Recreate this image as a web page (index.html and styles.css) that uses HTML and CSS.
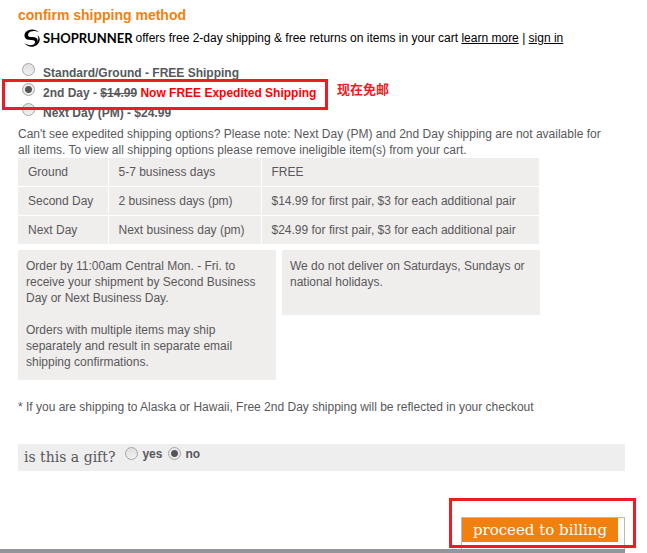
FILE: index.html
```html
<!DOCTYPE html>
<html lang="en">
<head>
    <meta charset="UTF-8">
    <meta name="viewport" content="width=device-width, initial-scale=1.0">
    <title>Confirm shipping method</title>
    <link rel="stylesheet" href="styles.css">
</head>
<body>
    <form class="checkout">
        <h1>confirm shipping method</h1>

        <p class="shoprunner">
            <svg class="sr-mark" viewBox="0 0 18 20" aria-hidden="true">
                <path d="M16.500 3.500C13 -.8 5 -.6 1.500 3.800C-.8 7.500 1 11.500 5.500 12L10.500 12.400C13.300 13 13 15.800 10.500 17.300C14 16.500 15.800 14.500 15.300 12C14.800 9.900 12.500 9.200 10 9L7 8.800C3.400 8.200 4 4.500 7.500 2.800C10.500 1.600 13.500 1.800 16.500 3.500Z"/>
                <path d="M15 7C19 9.500 18.300 15 14.500 17.800C10.500 20.900 4 20.400 .5 16C4.500 18.700 9.500 18.600 12.800 16.300C16.200 14 17 10.200 15 7Z"/>
            </svg>
            <span class="sr-name">SHOPRUNNER</span>
            <span>offers free 2-day shipping &amp; free returns on items in your cart <a href="#">learn more</a> | <a href="#">sign in</a></span>
        </p>

        <div class="methods">
            <div class="method">
                <input type="radio" name="method" id="ground">
                <label for="ground">Standard/Ground - FREE Shipping</label>
            </div>
            <div class="method">
                <input type="radio" name="method" id="second-day" checked>
                <label for="second-day">2nd Day - <s>$14.99</s> <span class="promo">Now FREE Expedited Shipping</span></label>
                <div class="mark mark-method"></div>
                <span class="mark-note" lang="zh">现在免邮</span>
            </div>
            <div class="method">
                <input type="radio" name="method" id="next-day">
                <label for="next-day">Next Day (PM) - $24.99</label>
            </div>
        </div>

        <p class="hint">Can't see expedited shipping options? Please note: Next Day (PM) and 2nd Day shipping are not available for all items. To view all shipping options please remove ineligible item(s) from your cart.</p>

        <table>
            <tbody>
                <tr>
                    <td>Ground</td>
                    <td>5-7 business days</td>
                    <td>FREE</td>
                </tr>
                <tr>
                    <td>Second Day</td>
                    <td>2 business days (pm)</td>
                    <td>$14.99 for first pair, $3 for each additional pair</td>
                </tr>
                <tr>
                    <td>Next Day</td>
                    <td>Next business day (pm)</td>
                    <td>$24.99 for first pair, $3 for each additional pair</td>
                </tr>
            </tbody>
        </table>

        <div class="notes">
            <div class="note">
                <p>Order by 11:00am Central Mon. - Fri. to receive your shipment by Second Business Day or Next Business Day.</p>
                <p>Orders with multiple items may ship separately and result in separate email shipping confirmations.</p>
            </div>
            <div class="note">
                <p>We do not deliver on Saturdays, Sundays or national holidays.</p>
            </div>
        </div>

        <p class="footnote">* If you are shipping to Alaska or Hawaii, Free 2nd Day shipping will be reflected in your checkout</p>

        <fieldset class="gift">
            <legend>is this a gift?</legend>
            <div class="gift-options">
                <input type="radio" name="gift" id="gift-yes">
                <label for="gift-yes">yes</label>
                <input type="radio" name="gift" id="gift-no" checked>
                <label for="gift-no">no</label>
            </div>
        </fieldset>

        <div class="actions">
            <div class="submit-box">
                <button type="submit">proceed to billing</button>
                <div class="mark mark-submit"></div>
            </div>
        </div>
        <hr>
    </form>
</body>
</html>
```

FILE: styles.css
```css
* {
    box-sizing: border-box;
}

body {
    margin: 0;
    background-color: #fff;
    color: #58585b;
    font-family: "Liberation Sans", Arial, sans-serif;
    font-size: 12px;
    line-height: 16px;
}

.checkout {
    padding: 6px 22px 0 18px;
}

h1 {
    margin: 0;
    color: #f0810f;
    font-size: 14px;
    line-height: 18px;
}

p {
    margin: 0;
}

.shoprunner {
    display: flex;
    align-items: center;
    margin-top: 4px;
    padding-left: 6px;
    color: #000;
}

.shoprunner a {
    color: #000;
}

.sr-mark {
    width: 16px;
    height: 20px;
    margin-right: 3px;
}

.sr-name {
    margin-right: 3px;
    font-family: Lato, sans-serif;
    font-size: 13px;
    font-weight: bold;
}

.methods {
    margin-top: 15px;
}

.method {
    position: relative;
    display: flex;
    height: 20px;
    padding-left: 4px;
    font-weight: bold;
}

.method label {
    margin-left: 8px;
    padding-top: 2px;
}

input[type="radio"] {
    appearance: none;
    flex: none;
    width: 13px;
    height: 13px;
    margin: 0;
    border: 1px solid #a5a5a5;
    border-radius: 50%;
    background: linear-gradient(#dedede, #f1f1f1);
}

input[type="radio"]:checked {
    background: radial-gradient(circle, #555 3px, #ebebeb 4px);
}

.promo {
    color: #f00;
}

/* red call-outs */
.mark {
    position: absolute;
    border: 3px solid #ed1c24;
    pointer-events: none;
}

.mark-method {
    top: -4px;
    left: -16px;
    z-index: 1;
    width: 326px;
    height: 31px;
}

.mark-note {
    position: absolute;
    top: -2px;
    left: 319px;
    color: #ed1c24;
    font-family: "Noto Sans CJK SC", sans-serif;
    font-size: 13px;
}

.hint {
    margin-top: 3px;
    padding-right: 10px;
}

table {
    width: 521px;
    max-width: 100%;
    border-collapse: collapse;
}

td {
    padding: 6px 10px;
    border-right: 1px solid #fff;
    border-bottom: 1px solid #fff;
    background-color: #f0eeec;
}

td:first-child {
    width: 90px;
}

td:nth-child(2) {
    width: 153px;
}

td:last-child {
    border-right: 0;
}

.notes {
    display: flex;
    align-items: flex-start;
    gap: 6px;
    margin-top: 5px;
}

.note {
    width: 258px;
    min-height: 65px;
    padding: 8px 8px 10px;
    background-color: #f0eeec;
}

.note p + p {
    margin-top: 16px;
}

.footnote {
    margin-top: 19px;
}

.gift {
    display: flex;
    align-items: flex-start;
    min-width: 0;
    margin: 29px 0 0;
    padding: 2px 6px;
    border: 0;
    background-color: #eee;
}

.gift legend {
    float: left;
    margin-right: 10px;
    padding: 0;
    font-family: "DejaVu Serif", serif;
    font-size: 14px;
    line-height: 23px;
}

.gift-options {
    display: flex;
    font-weight: bold;
}

.gift-options input[type="radio"] {
    margin-top: 1px;
}

.gift-options label {
    margin: 0 6px 0 4px;
}

.actions {
    display: flex;
    justify-content: flex-end;
    margin-top: 46px;
}

.submit-box {
    position: relative;
    width: 164px;
    height: 32px;
    border: 1px solid #bbb;
    border-bottom: 0;
}

button {
    display: block;
    width: 156px;
    height: 24px;
    padding: 0;
    border: 0;
    background-color: #f0810f;
    color: #fff;
    font-family: "DejaVu Serif", serif;
    font-size: 15px;
    line-height: 24px;
}

.mark-submit {
    top: -20px;
    right: -12px;
    width: 187px;
    height: 50px;
}

hr {
    height: 4px;
    margin: 0 0 0 -18px;
    border: 0;
    background-color: #949599;
}
```
